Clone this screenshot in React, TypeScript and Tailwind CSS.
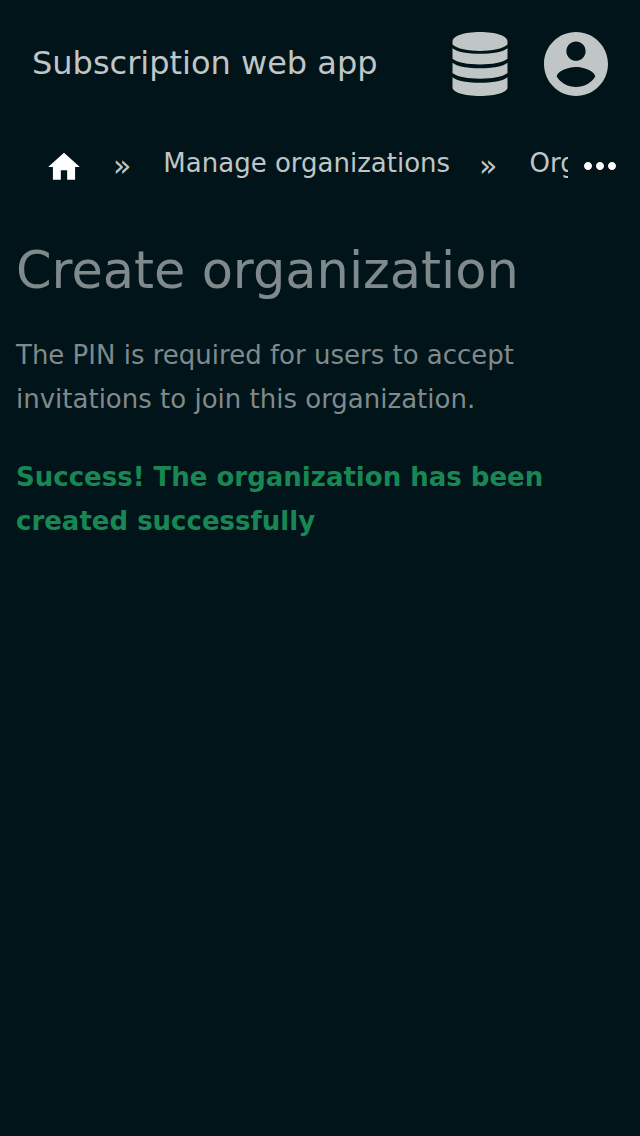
import { MdHome, MdMoreHoriz } from "react-icons/md";

function DatabaseIcon() {
  return (
    <svg className="h-16 w-14" viewBox="0 0 56 64" fill="currentColor" aria-hidden="true">
      <path d="M.5 9.5C.5 4 12 0 28 0s27.500 4 27.500 9.500v3C47 21 9 21 .5 12.500Z" />
      <path d="M.5 16.300c8.500 7.400 46.500 7.400 55 0v10.400c-8.500 7.600-46.500 7.600-55 0Z" />
      <path d="M.5 30.700c8.500 7.400 46.500 7.400 55 0v10.400c-8.500 7.600-46.500 7.600-55 0Z" />
      <path d="M.5 45.200c8.500 7.400 46.500 7.400 55 0v10.300C55.500 60.200 44 64 28 64S.5 60.200.5 55.500Z" />
    </svg>
  );
}

function AccountIcon() {
  return (
    <svg className="h-16 w-16" viewBox="2 2 20 20" fill="currentColor" aria-hidden="true">
      <path d="M12 2C6.48 2 2 6.48 2 12s4.48 10 10 10 10-4.48 10-10S17.52 2 12 2zm0 3c1.66 0 3 1.34 3 3s-1.34 3-3 3-3-1.34-3-3 1.34-3 3-3zm0 14.2c-2.5 0-4.71-1.28-6-3.22.03-1.99 4-3.08 6-3.08 1.99 0 5.97 1.09 6 3.08-1.29 1.94-3.5 3.22-6 3.22z" />
    </svg>
  );
}

function Header() {
  return (
    <header className="flex items-start justify-between p-8 text-[#c0c5c6]">
      <a href="#home" className="text-[32px] leading-[62px]">Subscription web app</a>
      <nav className="flex items-center gap-9" aria-label="Account">
        <button type="button" aria-label="Data"><DatabaseIcon /></button>
        <button type="button" aria-label="Profile"><AccountIcon /></button>
      </nav>
    </header>
  );
}

function Separator() {
  return <li aria-hidden="true" className="mr-8 ml-[29px] text-[30px]">»</li>;
}

function Breadcrumbs() {
  return (
    <nav className="flex h-[76px] items-center pr-4 pl-11 text-[#c0c5c6]" aria-label="Breadcrumb">
      <ol className="flex min-w-0 flex-1 items-center overflow-hidden text-[26px] leading-[44px] whitespace-nowrap">
        <li>
          <a href="#home" aria-label="Home" className="flex w-10 justify-center pt-[2px] text-white"><MdHome size={38} /></a>
        </li>
        <Separator />
        <li className="pb-[6px]"><a href="#organizations">Manage organizations</a></li>
        <Separator />
        <li className="pb-[6px]"><a href="#organization">Organization</a></li>
      </ol>
      <button type="button" aria-label="More" className="ml-2 shrink-0 text-white"><MdMoreHoriz size={48} /></button>
    </nav>
  );
}

export default function App() {
  return (
    <div className="min-h-screen bg-[#001419] font-['DejaVu_Sans',sans-serif]">
      <Header />
      <Breadcrumbs />
      <main className="px-4 pt-[35px] text-[26px] leading-[44px] text-[#808a8c]">
        <h1 className="mb-[30px] text-[51px] leading-[64px]">Create organization</h1>
        <p className="mb-[34px]">The PIN is required for users to accept invitations to join this organization.</p>
        <p role="status" className="font-bold text-[#198754]">Success! The organization has been created successfully</p>
      </main>
    </div>
  );
}
